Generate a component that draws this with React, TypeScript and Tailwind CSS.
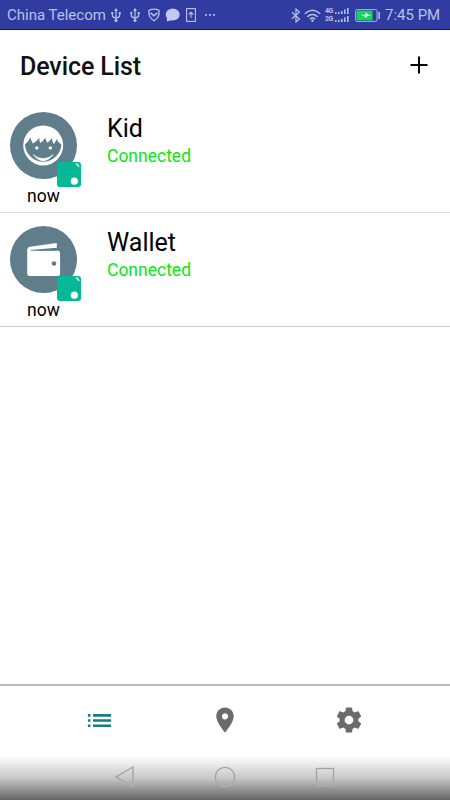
import type { ReactNode } from 'react'

interface Device {
  id: number
  name: string
  status: string
  lastSeen: string
  icon: ReactNode
}

function KidIcon() {
  return (
    <svg viewBox="0 0 67 67" className="w-[67px] h-[67px]">
      <circle cx="33.5" cy="33.5" r="33.5" fill="#5f7d8b" />
      <circle cx="33.2" cy="33.4" r="20" fill="#fff" />
      <path
        d="M14.9 32.4 Q18.5 30 20.5 25.6 Q21.3 29.5 22.9 31.6 Q27 29.5 29.3 25.8 Q29.2 29 30.2 31 Q33.5 29 35.3 25.8 Q35.8 29 37.6 30.8 Q40.5 28.6 41.9 25.8 Q42 29.5 43.6 32 Q45.7 30 46.7 27 Q48 31 51.4 32.4 A18.3 18.8 0 0 1 14.9 32.4 Z"
        fill="#5f7d8b"
      />
      <circle cx="26.8" cy="35.9" r="1.7" fill="#fff" />
      <circle cx="40.3" cy="35.9" r="1.7" fill="#fff" />
      <path d="M23 42.6 Q33.2 50.6 43.4 42.6 Q33.2 55.6 23 42.6 Z" fill="#fff" stroke="#fff" strokeWidth="0.5" />
    </svg>
  )
}

function WalletIcon() {
  return (
    <svg viewBox="0 0 67 67" className="w-[67px] h-[67px]">
      <circle cx="33.5" cy="33.5" r="33.5" fill="#5f7d8b" />
      <path
        d="M17.2 23.4 Q17.2 21.2 19.8 20.7 L46.8 17 V22.4 L22 24.6 H47.8 Q50.1 24.8 50.1 27.2 V47.8 Q50.1 50 47.8 50 H19.5 Q17.2 50 17.2 47.8 Z"
        fill="#fff"
      />
      <path d="M20.4 24 L46.8 21.8 V24.8 H21 Z" fill="#5f7d8b" />
      <circle cx="44" cy="37.5" r="2.3" fill="#5f7d8b" />
    </svg>
  )
}

function TagBadge() {
  return (
    <svg viewBox="0 0 24 25" className="absolute left-[47px] top-[50px] w-6 h-[25px]">
      <rect width="24" height="25" rx="3" fill="#05b896" />
      <circle cx="17.3" cy="19.2" r="3.6" fill="#fff" />
      <path d="M18.8 1.4 Q20.8 2.2 22 4.8" fill="none" stroke="#d5f5ed" strokeWidth="1.6" />
    </svg>
  )
}

const devices: Device[] = [
  { id: 1, name: 'Kid', status: 'Connected', lastSeen: 'now', icon: <KidIcon /> },
  { id: 2, name: 'Wallet', status: 'Connected', lastSeen: 'now', icon: <WalletIcon /> },
]

function UsbIcon() {
  return (
    <svg viewBox="0 0 10 14" className="w-[10px] h-[14px]" fill="none" stroke="#b9c0ef" strokeWidth="1.2">
      <path d="M5 1.5 V12 M1.3 5 V7.2 Q1.3 9.3 5 10 Q8.7 9.3 8.7 7.2 V5" />
      <path d="M5 0 L7 3 H3 Z" fill="#b9c0ef" stroke="none" />
      <circle cx="5" cy="12.4" r="1.5" fill="#b9c0ef" stroke="none" />
      <path d="M0.3 4 H2.3 V6 H0.3 Z M7.7 4 H9.7 V6 H7.7 Z" fill="#b9c0ef" stroke="none" />
    </svg>
  )
}

function StatusBar() {
  return (
    <div className="h-[30px] shrink-0 bg-[#303c9f] border-b border-[#10146e] flex items-center justify-between pl-[7px] pr-[10px] pt-px text-[#b9c0ef] text-[15px]">
      <div className="flex items-center">
        <span className="w-[104px] whitespace-nowrap">China Telecom</span>
        <UsbIcon />
        <div className="w-[9px]" />
        <UsbIcon />
        <svg viewBox="0 0 12 14" className="ml-2 w-3 h-[14px]" fill="none" stroke="#b9c0ef" strokeWidth="1.3">
          <path d="M1 2.4 Q6 0 11 2.4 Q12 9 6 12.8 Q0 9 1 2.4 Z" />
          <path d="M2.6 4.8 L6 7.8 L9.4 4.8" strokeWidth="1.6" />
        </svg>
        <svg viewBox="0 0 15 14" className="ml-[5px] w-[15px] h-[14px]" fill="#c3c9f4">
          <ellipse cx="7.7" cy="6.6" rx="7" ry="6" />
          <path d="M2 9 L1.8 13.6 L7 12 Z" />
        </svg>
        <svg viewBox="0 0 10 14" className="ml-[6px] w-[10px] h-[14px]" fill="none" stroke="#b9c0ef" strokeWidth="1.1">
          <rect x="0.6" y="0.6" width="8.8" height="12.8" />
          <path d="M5 10 V4.5 M2.8 6.5 L5 4.2 L7.2 6.5" />
        </svg>
        <svg viewBox="0 0 12 4" className="ml-2 w-3 h-1" fill="#b9c0ef">
          <rect x="1" y="1" width="1.8" height="1.8" />
          <rect x="5.1" y="1" width="1.8" height="1.8" />
          <rect x="9.2" y="1" width="1.8" height="1.8" />
        </svg>
      </div>

      <div className="flex items-center">
        <svg viewBox="0 0 10 15" className="w-[10px] h-[15px]" fill="none" stroke="#b9c0ef" strokeWidth="1.2">
          <path d="M1 4.2 L8.4 11 L5 14 V1 L8.4 4 L1 10.8" />
        </svg>
        <svg viewBox="0 0 17 13" className="ml-[3px] w-[17px] h-[13px]" fill="none" stroke="#b9c0ef" strokeWidth="1.5">
          <path d="M0.8 4.8 Q8.5 -2.2 16.2 4.8 M3.4 7.7 Q8.5 3.2 13.6 7.7 M5.8 10.2 Q8.5 8 11.2 10.2" />
          <circle cx="8.5" cy="11.8" r="1.2" fill="#b9c0ef" stroke="none" />
        </svg>
        <div className="ml-1 flex flex-col text-[7px] leading-[8px] font-bold">
          {['4G', '2G'].map((network) => (
            <div key={network} className="h-2 flex items-center">
              <span className="w-[9px] tracking-[-0.4px]">{network}</span>
              <svg viewBox="0 0 15 6" className="w-[15px] h-[6px]" fill="#b9c0ef">
                <path d="M1 4.3 H2.6 V6 H1 Z M4 4 H5.6 V6 H4 Z M7 3 H8.6 V6 H7 Z M10 1.5 H11.6 V6 H10 Z M13 0 H14.6 V6 H13 Z" />
              </svg>
            </div>
          ))}
        </div>
        <svg viewBox="0 0 26 13" className="ml-[6px] w-[26px] h-[13px]">
          <rect x="0.6" y="0.6" width="21.4" height="11.8" rx="1" fill="none" stroke="#a9b0e2" />
          <rect x="1.6" y="1.6" width="15.9" height="9.8" fill="#12d65c" />
          <path d="M6 5.8 H10.5 V3.6 L16 7 H12 V9 Z" fill="#e4ffe9" />
          <rect x="23.2" y="3" width="1.8" height="7" fill="#a9b0e2" />
        </svg>
        <span className="ml-1 w-[55px] whitespace-nowrap">7:45 PM</span>
      </div>
    </div>
  )
}

function DeviceRow({ device }: { device: Device }) {
  return (
    <li className="h-[114px] flex border-b border-[#e2e2e2] last:border-[#cfcfcf] pl-[10px] pt-[13px]">
      <div className="relative w-[67px]">
        {device.icon}
        <TagBadge />
        <div className="text-center text-[17.5px] leading-[35px] text-black">{device.lastSeen}</div>
      </div>
      <div className="ml-[30px] pt-[2px]">
        <div className="text-[25px] leading-[30px] text-black">{device.name}</div>
        <div className="text-[17.5px] leading-[25px] text-[#0be814]">{device.status}</div>
      </div>
    </li>
  )
}

export default function App() {
  return (
    <div className="w-[450px] h-[800px] flex flex-col overflow-hidden bg-white font-[Roboto,sans-serif]">
      <StatusBar />

      {/* Header */}
      <header className="h-[69px] shrink-0 flex items-center justify-between pl-5 pr-[22px]">
        <h1 className="mt-[4px] text-[25px] leading-[30px] font-medium tracking-[-0.1px] text-[#111]">Device List</h1>
        <svg viewBox="0 0 18 18" className="w-[18px] h-[18px]" stroke="#000" strokeWidth="2">
          <path d="M9 0.5 V17.5 M0.5 9 H17.5" />
        </svg>
      </header>

      <ul className="flex-1">
        {devices.map((device) => (
          <DeviceRow key={device.id} device={device} />
        ))}
      </ul>

      {/* Bottom tabs */}
      <nav className="h-[72px] shrink-0 border-t-2 border-[#b9b9b9] grid grid-cols-[124px_124px_124px] justify-center items-center pr-px pb-[2px]">
        <svg viewBox="0 0 24 24" className="ml-[45px] w-[31px] h-[31px]" fill="#12807f">
          <path d="M3 13h2v-2H3v2zm0 4h2v-2H3v2zm0-8h2V7H3v2zm4 4h14v-2H7v2zm0 4h14v-2H7v2zM7 7v2h14V7H7z" />
        </svg>
        <svg viewBox="0 0 24 24" className="mx-auto w-[30px] h-[30px]" fill="#6b6b6b">
          <path d="M12 2C8.13 2 5 5.13 5 9c0 5.25 7 13 7 13s7-7.75 7-13c0-3.87-3.13-7-7-7zm0 9.5c-1.38 0-2.5-1.12-2.5-2.5s1.12-2.5 2.5-2.5 2.5 1.12 2.5 2.5-1.12 2.5-2.5 2.5z" />
        </svg>
        <svg viewBox="0 0 24 24" className="mx-auto w-[30px] h-[30px]" fill="#6b6b6b">
          <path d="M19.43 12.98c.04-.32.07-.64.07-.98s-.03-.66-.07-.98l2.11-1.65c.19-.15.24-.42.12-.64l-2-3.46c-.12-.22-.39-.3-.61-.22l-2.49 1c-.52-.4-1.08-.73-1.69-.98l-.38-2.65C14.46 2.18 14.25 2 14 2h-4c-.25 0-.46.18-.49.42l-.38 2.65c-.61.25-1.17.59-1.69.98l-2.49-1c-.23-.09-.49 0-.61.22l-2 3.46c-.13.22-.07.49.12.64l2.11 1.65c-.04.32-.07.65-.07.98s.03.66.07.98l-2.11 1.65c-.19.15-.24.42-.12.64l2 3.46c.12.22.39.3.61.22l2.49-1c.52.4 1.08.73 1.69.98l.38 2.65c.03.24.24.42.49.42h4c.25 0 .46-.18.49-.42l.38-2.65c.61-.25 1.17-.59 1.69-.98l2.49 1c.23.09.49 0 .61-.22l2-3.46c.12-.22.07-.49-.12-.64l-2.11-1.65zM12 15.5c-1.93 0-3.5-1.57-3.5-3.5s1.57-3.5 3.5-3.5 3.5 1.57 3.5 3.5-1.57 3.5-3.5 3.5z" />
        </svg>
      </nav>

      {/* System navigation */}
      <div className="h-[44px] shrink-0 grid grid-cols-[100px_100px_100px] justify-center items-center pb-[2px] bg-linear-to-b from-white via-[#c8c8c8] via-50% to-[#656565]">
        <svg viewBox="0 0 22 22" className="mx-auto w-[22px] h-[22px]" fill="none" stroke="url(#fade)" strokeWidth="1.3">
          <defs>
            <linearGradient id="fade" gradientUnits="userSpaceOnUse" x1="0" y1="0" x2="0" y2="22">
              <stop offset="0" stopColor="#a2a2a2" />
              <stop offset="0.6" stopColor="#a2a2a2" />
              <stop offset="1" stopColor="#b4b4b4" />
            </linearGradient>
          </defs>
          <path d="M19 1 L2 11 L19 21 Z" />
        </svg>
        <svg viewBox="0 0 22 22" className="mx-auto w-[22px] h-[22px]" fill="none" stroke="url(#fade)" strokeWidth="1.3">
          <circle cx="11" cy="11" r="9.7" />
        </svg>
        <svg viewBox="0 0 22 22" className="mx-auto w-[22px] h-[22px]" fill="none" stroke="url(#fade)" strokeWidth="1.3">
          <rect x="2.5" y="2.5" width="17" height="17" />
        </svg>
      </div>
    </div>
  )
}
